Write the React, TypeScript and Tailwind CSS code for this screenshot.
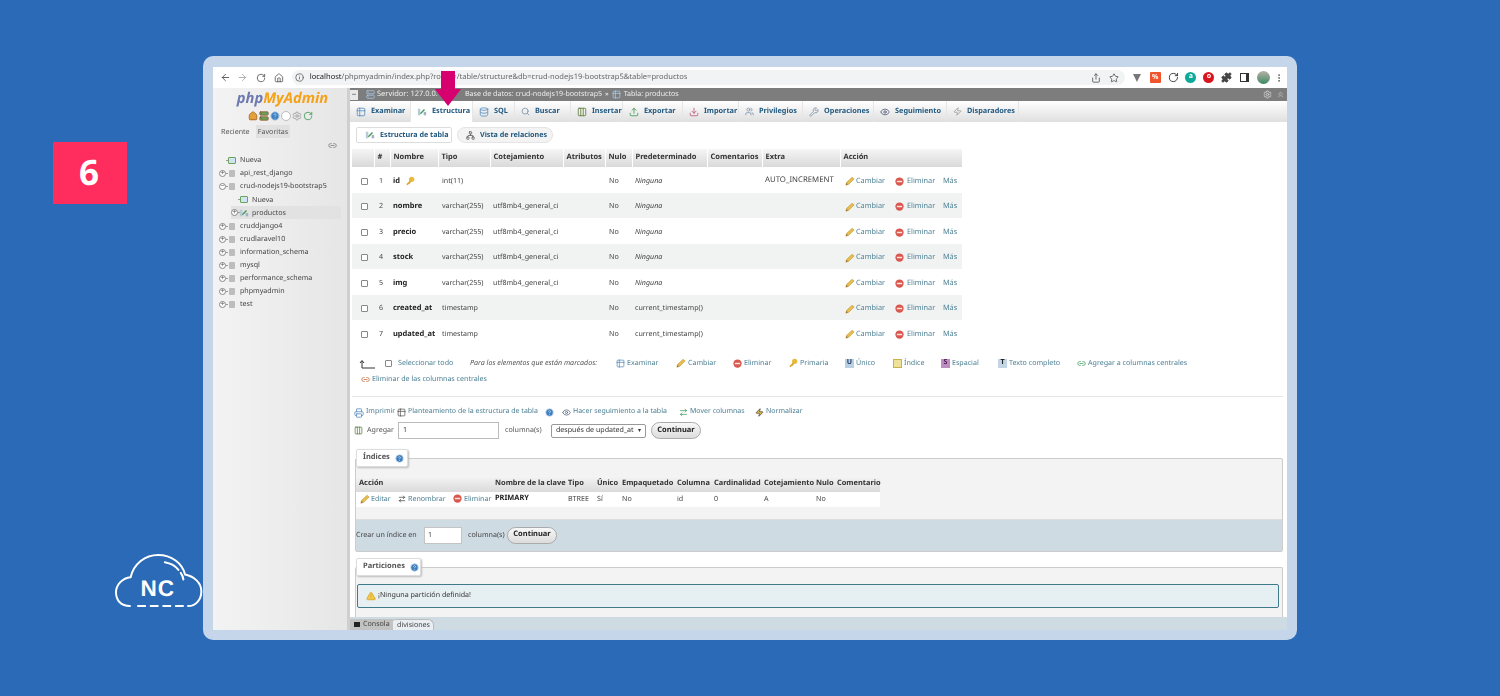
import {
  ArrowLeft,
  ArrowRight,
  RotateCw,
  House,
  Info,
  Share,
  Star,
  Puzzle,
  EllipsisVertical,
  Settings,
  ChevronsUp,
  Server,
  Table2,
  Network,
  Database,
  Search,
  Download,
  Upload,
  Users,
  Wrench,
  Eye,
  Zap,
  Printer,
  Link2,
  Columns3,
  HelpCircle,
  TriangleAlert,
  ArrowRightLeft,
} from "lucide-react";
import type { ReactNode } from "react";

const font = "font-['Liberation_Sans',Arial,sans-serif] [text-rendering:geometricPrecision]";

function Pencil() {
  return (
    <svg viewBox="0 0 12 12" className="h-[10px] w-[10px] shrink-0">
      <path d="M1 11 L2 7.5 L8.5 1.5 L11 3.5 L4.5 10 Z" fill="#e8bd4f" stroke="#b98f2e" strokeWidth="0.6" />
      <path d="M1 11 L2 8.5 L3.5 10 Z" fill="#8a6a32" />
    </svg>
  );
}

function Del() {
  return (
    <svg viewBox="0 0 12 12" className="h-[9px] w-[9px] shrink-0">
      <circle cx="6" cy="6" r="5.5" fill="#d9574e" />
      <rect x="2.5" y="5" width="7" height="2" fill="#fbe3e0" />
    </svg>
  );
}

function KeyIcon() {
  return (
    <svg viewBox="0 0 12 12" className="h-[10px] w-[10px] shrink-0">
      <circle cx="8" cy="4" r="3.2" fill="#e7b93f" />
      <path d="M6 5.5 L1.5 10 L3 11 L4 9.8 L5 10 L7.5 7 Z" fill="#d9a62e" />
    </svg>
  );
}

function Struct() {
  return (
    <svg viewBox="0 0 12 12" className="h-[10px] w-[10px] shrink-0">
      <path d="M1 2 H4 V10 H1 Z" fill="#b9cbd6" />
      <path d="M4 8 L9 3" stroke="#3f9a55" strokeWidth="1.6" />
      <path d="M8 6 H11 V10 H8 Z" fill="#9fb3c0" />
    </svg>
  );
}

function Help() {
  return <HelpCircle className="h-[9px] w-[9px] shrink-0 fill-[#3d7fc0] text-[#c9dcef]" />;
}

function Btn({ w }: { w: string }) {
  return (
    <span
      className={`flex h-[17px] items-center justify-center rounded-full border border-[#aaaaaa] bg-gradient-to-b from-[#f8f8f8] to-[#dcdcdc] text-[7.5px] font-bold text-[#222222] ${w}`}
    >
      Continuar
    </span>
  );
}

const tabs = [
  { label: "Examinar", w: "w-[61px]", icon: <Table2 className="h-[10px] w-[10px] text-[#5b8fc0]" /> },
  { label: "Estructura", w: "w-[62px]", icon: <Struct />, active: true },
  { label: "SQL", w: "w-[42px]", icon: <Database className="h-[10px] w-[10px] text-[#5b8fc0]" /> },
  { label: "Buscar", w: "w-[56px]", icon: <Search className="h-[9px] w-[9px] text-[#6f8ea8]" /> },
  { label: "Insertar", w: "w-[52px]", icon: <Columns3 className="h-[10px] w-[10px] text-[#5c7d3c]" /> },
  { label: "Exportar", w: "w-[60px]", icon: <Upload className="h-[10px] w-[10px] text-[#3f9a55]" /> },
  { label: "Importar", w: "w-[56px]", icon: <Download className="h-[10px] w-[10px] text-[#c2557c]" /> },
  { label: "Privilegios", w: "w-[64px]", icon: <Users className="h-[9px] w-[9px] text-[#6f8ea8]" /> },
  { label: "Operaciones", w: "w-[71px]", icon: <Wrench className="h-[10px] w-[10px] text-[#7f93a5]" /> },
  { label: "Seguimiento", w: "w-[73px]", icon: <Eye className="h-[10px] w-[10px] text-[#55617a]" /> },
  { label: "Disparadores", w: "w-[72px]", icon: <Zap className="h-[9px] w-[9px] text-[#8f9a8a]" /> },
];

const rows = [
  { n: 1, name: "id", type: "int(11)", col: "", def: "Ninguna", italic: true, extra: "AUTO_INCREMENT", key: true },
  { n: 2, name: "nombre", type: "varchar(255)", col: "utf8mb4_general_ci", def: "Ninguna", italic: true },
  { n: 3, name: "precio", type: "varchar(255)", col: "utf8mb4_general_ci", def: "Ninguna", italic: true },
  { n: 4, name: "stock", type: "varchar(255)", col: "utf8mb4_general_ci", def: "Ninguna", italic: true },
  { n: 5, name: "img", type: "varchar(255)", col: "utf8mb4_general_ci", def: "Ninguna", italic: true },
  { n: 6, name: "created_at", type: "timestamp", col: "", def: "current_timestamp()" },
  { n: 7, name: "updated_at", type: "timestamp", col: "", def: "current_timestamp()" },
];

const headers = [
  { t: "", w: "w-[22px]" },
  { t: "#", w: "w-[16px]" },
  { t: "Nombre", w: "w-[48px]" },
  { t: "Tipo", w: "w-[52px]" },
  { t: "Cotejamiento", w: "w-[73px]" },
  { t: "Atributos", w: "w-[42px]" },
  { t: "Nulo", w: "w-[27px]" },
  { t: "Predeterminado", w: "w-[75px]" },
  { t: "Comentarios", w: "w-[55px]" },
  { t: "Extra", w: "w-[78px]" },
  { t: "Acción", w: "w-[122px]" },
];

const tree = [
  { label: "Nueva", kind: "new" },
  { label: "api_rest_django", kind: "db" },
  { label: "crud-nodejs19-bootstrap5", kind: "open" },
  { label: "Nueva", kind: "subnew" },
  { label: "productos", kind: "table" },
  { label: "cruddjango4", kind: "db" },
  { label: "crudlaravel10", kind: "db" },
  { label: "information_schema", kind: "db" },
  { label: "mysql", kind: "db" },
  { label: "performance_schema", kind: "db" },
  { label: "phpmyadmin", kind: "db" },
  { label: "test", kind: "db" },
];

const bulk = [
  { label: "Examinar", w: "w-[60px]", icon: <Table2 className="h-[9px] w-[9px] text-[#5b8fc0]" /> },
  { label: "Cambiar", w: "w-[57px]", icon: <Pencil /> },
  { label: "Eliminar", w: "w-[55px]", icon: <Del /> },
  { label: "Primaria", w: "w-[57px]", icon: <KeyIcon /> },
  { label: "Único", w: "w-[48px]", icon: <span className="flex h-[9px] w-[9px] items-center justify-center bg-[#b9cfe4] text-[7px] font-bold text-[#1d3b66]">U</span> },
  { label: "Índice", w: "w-[48px]", icon: <span className="h-[9px] w-[9px] border border-[#c9b14a] bg-[#efe19a]" /> },
  { label: "Espacial", w: "w-[57px]", icon: <span className="flex h-[9px] w-[9px] items-center justify-center bg-[#bb8fc0] text-[7px] font-bold text-[#50205a]">S</span> },
  { label: "Texto completo", w: "w-[79px]", icon: <span className="flex h-[9px] w-[9px] items-center justify-center bg-[#c3d5e4] text-[7px] font-bold text-[#222222]">T</span> },
  { label: "Agregar a columnas centrales", w: "w-[125px]", icon: <Link2 className="h-[9px] w-[9px] text-[#3f9a55]" /> },
];

function Row({ children, className = "" }: { children: ReactNode; className?: string }) {
  return <div className={`flex items-center ${className}`}>{children}</div>;
}

function Legend({ children, w }: { children: ReactNode; w: string }) {
  return (
    <div
      className={`relative z-10 ml-[1px] flex h-[18px] items-center gap-[5px] rounded-[2px] border border-[#dddddd] bg-white pl-[6px] pt-[1px] text-[7.5px] font-bold text-[#555555] shadow-[1px_1px_2px_#bbbbbb] ${w}`}
    >
      {children}
    </div>
  );
}

function TreeRow({ label, kind }: { label: string; kind: string }) {
  const sub = kind === "subnew" || kind === "table";
  return (
    <div
      className={`flex h-[13.1px] items-center text-[7.1px] text-[#444444] ${
        kind === "table" ? "ml-[12px] mr-[6px] bg-[#e2e2e2]" : sub ? "ml-[12px]" : ""
      }`}
    >
      <span className="flex w-[7px] shrink-0 justify-center">
        {kind !== "new" && kind !== "subnew" && (
          <span className="flex h-[7px] w-[7px] shrink-0 items-center justify-center rounded-full border border-[#888888] bg-white text-[7px] leading-none text-[#555555]">
            {kind === "open" ? "−" : "+"}
          </span>
        )}
      </span>
      <span className="h-px w-[2px] shrink-0 bg-[#999999]" />
      <span className="mr-[4px] flex w-[8px] shrink-0 justify-center">
        {kind === "table" ? (
          <Struct />
        ) : kind === "new" || kind === "subnew" ? (
          <span className="h-[7px] w-[8px] rounded-[1px] border border-[#6aa35a] bg-[#cfe3f2]" />
        ) : (
          <span className="h-[7px] w-[6px] rounded-[1px] bg-[#bdbdbd]" />
        )}
      </span>
      <span className="whitespace-nowrap">{label}</span>
    </div>
  );
}

function Sidebar() {
  return (
    <aside className="flex w-[137px] shrink-0 flex-col border-r-[3px] border-[#cfcfcf] bg-gradient-to-r from-[#f3f3f3] to-[#e6e6e6] pl-[6px] text-[7.1px]">
      <div className="mt-[1px] flex h-[18px] items-center justify-center pr-[1px] text-[14.7px] font-bold italic leading-none">
        <span className="text-[#6c78af]">php</span>
        <span className="text-[#f5a21b]">MyAdmin</span>
      </div>
      <div className="mt-[4px] flex justify-center gap-[1px] pr-[6px]">
        <House className="h-[10px] w-[10px] fill-[#e2a13a] text-[#a8641d]" />
        <Server className="h-[10px] w-[10px] fill-[#6aa35a] text-[#94572f]" />
        <HelpCircle className="h-[10px] w-[10px] fill-[#3d7fc0] text-[#bcd3ea]" />
        <span className="h-[10px] w-[10px] rounded-full border border-[#bbbbbb] bg-white" />
        <Settings className="h-[10px] w-[10px] text-[#999999]" />
        <RotateCw className="h-[10px] w-[10px] text-[#3f9a55]" />
      </div>
      <div className="mt-[4px] flex h-[13px] items-center pl-[2px] text-[#555555]">
        <span className="w-[35px] pt-[1px]">Reciente</span>
        <span className="flex h-[13px] w-[34px] items-center justify-center bg-[#e1e1e1] pt-[1px]">Favoritas</span>
      </div>
      <div className="mt-[3px] flex h-[10px] justify-end pr-[10px]">
        <Link2 className="h-[9px] w-[9px] text-[#777777]" />
      </div>
      <div className="mt-[3px]">
        {tree.map((t, i) => (
          <TreeRow key={i} label={t.label} kind={t.kind} />
        ))}
      </div>
    </aside>
  );
}

function Main() {
  return (
    <main className="relative min-w-0 flex-1 overflow-hidden bg-white">
      <div className="flex h-[13px] items-center bg-[#7d7d7d] text-[7.1px] text-[#eeeeee]">
        <span className="flex h-[10px] w-[8px] items-center justify-center bg-[#e8e8e8] text-[8px] leading-none text-[#333333]">−</span>
        <Server className="ml-[8px] h-[9px] w-[9px] text-[#a9cbe8]" />
        <span className="ml-[2px] w-[88px] whitespace-nowrap text-[7.5px]">Servidor: 127.0.0.1</span>
        <span className="w-[135px] whitespace-nowrap">Base de datos: crud-nodejs19-bootstrap5</span>
        <span className="ml-[5px]">»</span>
        <Table2 className="ml-[3px] h-[9px] w-[9px] text-[#a9cbe8]" />
        <span className="ml-[3px] whitespace-nowrap">Tabla: productos</span>
        <Settings className="ml-auto h-[9px] w-[9px] text-[#dddddd]" />
        <ChevronsUp className="ml-[4px] mr-[2px] h-[9px] w-[9px] text-[#cccccc]" />
      </div>

      <div className="flex h-[21px] bg-gradient-to-b from-white to-[#dfdfdf] text-[7.3px] font-bold text-[#235a81]">
        {tabs.map((t) => (
          <div
            key={t.label}
            className={`flex items-center gap-[5px] whitespace-nowrap border-r border-[#e6e6e6] pl-[6px] ${t.w} ${t.active ? "bg-white" : ""}`}
          >
            {t.icon}
            {t.label}
          </div>
        ))}
      </div>

      <div className="ml-[6px] mt-[4px] flex h-[17px] gap-[5px] whitespace-nowrap pt-[1px] text-[7.2px] font-bold text-[#235a81]">
        <div className="flex w-[96px] items-center gap-[5px] rounded-[2px] border border-[#dddddd] bg-white pl-[8px]">
          <Struct />
          Estructura de tabla
        </div>
        <div className="flex w-[96px] items-center gap-[5px] rounded-full border border-[#e4e4e4] bg-[#f3f3f3] pl-[8px]">
          <Network className="h-[9px] w-[9px] text-[#555555]" />
          Vista de relaciones
        </div>
      </div>

      <table className="ml-[2px] mt-[6px] w-[610px] table-fixed border-collapse text-[7.1px] text-[#444444]">
        <thead>
          <tr className="h-[18px] text-[7.5px]">
            {headers.map((h, i) => (
              <th
                key={i}
                className={`border-r border-white bg-gradient-to-b from-[#f5f5f5] to-[#d9d9d9] pl-[3px] text-left font-bold text-[#333333] ${h.w}`}
              >
                {h.t}
              </th>
            ))}
          </tr>
        </thead>
        <tbody>
          {rows.map((r) => (
            <tr key={r.n} className={`h-[25.5px] [&>td]:pt-[3px] ${r.n % 2 === 0 ? "bg-[#f1f3f3]" : "bg-white"}`}>
              <td className="pl-[9px]">
                <span className="block h-[7px] w-[7px] rounded-[1px] border border-[#888888] bg-white" />
              </td>
              <td className="pl-[5px]">{r.n}</td>
              <td className="pl-[3px] text-[7.5px] font-bold text-[#222222]">
                <span className="flex items-center gap-[5px] whitespace-nowrap">
                  {r.name}
                  {r.key && <KeyIcon />}
                </span>
              </td>
              <td className="pl-[4px]">{r.type}</td>
              <td className="whitespace-nowrap pl-[3px]">{r.col}</td>
              <td />
              <td className="pl-[4px]">No</td>
              <td className={`whitespace-nowrap pl-[3px] ${r.italic ? "italic" : ""}`}>{r.def}</td>
              <td />
              <td className="whitespace-nowrap pl-[3px] text-[7.8px]">{r.extra}</td>
              <td className="pl-[5px]">
                <span className="flex items-center text-[7.3px] text-[#4b7f92]">
                  <span className="flex w-[50px] items-center gap-[1px]">
                    <Pencil />
                    Cambiar
                  </span>
                  <span className="flex w-[48px] items-center gap-[3px]">
                    <Del />
                    Eliminar
                  </span>
                  Más
                </span>
              </td>
            </tr>
          ))}
        </tbody>
      </table>

      <Row className="ml-[9px] mt-[12px] h-[12px] text-[7.1px] text-[#4b7f92]">
        <svg viewBox="0 0 16 10" className="h-[10px] w-[16px] shrink-0">
          <path d="M3 9 V2 M1 4 L3 1.5 L5 4 M3 9 H16" stroke="#333333" strokeWidth="1" fill="none" />
        </svg>
        <span className="ml-[10px] h-[7px] w-[7px] rounded-[1px] border border-[#888888] bg-white" />
        <span className="ml-[6px] w-[72px]">Seleccionar todo</span>
        <span className="w-[146px] whitespace-nowrap italic text-[#555555]">Para los elementos que están marcados:</span>
        {bulk.map((b) => (
          <span key={b.label} className={`flex items-center gap-[2px] whitespace-nowrap ${b.w}`}>
            {b.icon}
            {b.label}
          </span>
        ))}
      </Row>
      <Row className="ml-[11px] mt-[4px] h-[12px] gap-[2px] text-[7.1px] text-[#4b7f92]">
        <Link2 className="h-[9px] w-[9px] text-[#c2683a]" />
        Eliminar de las columnas centrales
      </Row>

      <div className="ml-[2px] mr-[4px] mt-[10px] h-px bg-[#e6e6e6]" />

      <Row className="ml-[4px] mt-[10px] h-[12px] text-[7px] text-[#4b7f92]">
        <span className="flex w-[43px] items-center gap-[2px]">
          <Printer className="h-[10px] w-[10px] text-[#5b8fc0]" />
          Imprimir
        </span>
        <span className="flex w-[165px] items-center gap-[2px] whitespace-nowrap">
          <Table2 className="h-[9px] w-[9px] text-[#555555]" />
          Planteamiento de la estructura de tabla
          <span className="ml-[5px]"><Help /></span>
        </span>
        <span className="flex w-[117px] items-center gap-[2px] whitespace-nowrap">
          <Eye className="h-[9px] w-[9px] text-[#55617a]" />
          Hacer seguimiento a la tabla
        </span>
        <span className="flex w-[76px] items-center gap-[2px] whitespace-nowrap">
          <ArrowRightLeft className="h-[9px] w-[9px] text-[#3f9a55]" />
          Mover columnas
        </span>
        <span className="flex items-center gap-[2px]">
          <Zap className="h-[9px] w-[9px] fill-[#e8b93f] text-[#444444]" />
          Normalizar
        </span>
      </Row>

      <Row className="ml-[4px] mt-[3px] h-[18px] text-[7.1px] text-[#555555]">
        <Columns3 className="h-[9px] w-[9px] text-[#5c7d3c]" />
        <span className="ml-[4px] w-[31px]">Agregar</span>
        <span className="flex h-[17px] w-[101px] items-center border border-[#bbbbbb] bg-white pl-[4px] text-[#333333]">1</span>
        <span className="ml-[6px] w-[46px]">columna(s)</span>
        <span className="flex h-[14px] w-[95px] items-center justify-between whitespace-nowrap rounded-[2px] border border-[#999999] bg-white px-[4px] text-[#333333]">
          después de updated_at
          <span className="text-[6px]">▾</span>
        </span>
        <span className="ml-[5px]">
          <Btn w="w-[50px]" />
        </span>
      </Row>

      <div className="ml-[5px] mr-[4px] mt-[9px]">
        <Legend w="w-[52px]">
          Índices
          <Help />
        </Legend>
        <div className="mt-[-9px] rounded-[2px] border border-[#cccccc] bg-[#f3f3f3]">
          <div className="h-[17px]" />
          <table className="w-[524px] table-fixed border-collapse text-[7.1px] text-[#444444]">
            <thead>
              <tr className="h-[16px] bg-gradient-to-b from-[#f5f5f5] to-[#dadada] text-left text-[7.4px] font-bold text-[#333333]">
                <th className="w-[137px] pl-[3px]">Acción</th>
                <th className="w-[72px] whitespace-nowrap pl-[2px]">Nombre de la clave</th>
                <th className="w-[29px] pl-[3px]">Tipo</th>
                <th className="w-[25px] pl-[3px]">Único</th>
                <th className="w-[55px] pl-[3px]">Empaquetado</th>
                <th className="w-[37px] pl-[3px]">Columna</th>
                <th className="w-[50px] pl-[3px]">Cardinalidad</th>
                <th className="w-[52px] pl-[3px]">Cotejamiento</th>
                <th className="w-[21px] pl-[3px]">Nulo</th>
                <th className="pl-[3px]">Comentario</th>
              </tr>
            </thead>
            <tbody>
              <tr className="h-[15px] bg-white">
                <td className="pl-[4px]">
                  <span className="flex items-center whitespace-nowrap text-[#4b7f92]">
                    <span className="flex w-[38px] items-center gap-[1px]">
                      <Pencil />
                      Editar
                    </span>
                    <span className="flex w-[55px] items-center gap-[2px]">
                      <ArrowRightLeft className="h-[8px] w-[8px] text-[#333333]" />
                      Renombrar
                    </span>
                    <span className="flex items-center gap-[2px]">
                      <Del />
                      Eliminar
                    </span>
                  </span>
                </td>
                <td className="pl-[2px] text-[7.4px] font-bold text-[#222222]">PRIMARY</td>
                <td className="pl-[3px]">BTREE</td>
                <td className="pl-[3px]">Sí</td>
                <td className="pl-[3px]">No</td>
                <td className="pl-[3px]">id</td>
                <td className="pl-[3px]">0</td>
                <td className="pl-[3px]">A</td>
                <td className="pl-[3px]">No</td>
                <td />
              </tr>
            </tbody>
          </table>
          <div className="h-[12px]" />
          <Row className="h-[32px] border-t border-[#dddddd] bg-[#cfdbe3] text-[7.1px] text-[#444444]">
            <span className="w-[68px] whitespace-nowrap">Crear un índice en</span>
            <span className="flex h-[17px] w-[38px] items-center border border-[#c4c4c4] bg-white pl-[3px]">1</span>
            <span className="ml-[6px] w-[39px]">columna(s)</span>
            <Btn w="w-[50px]" />
          </Row>
        </div>
      </div>

      <div className="ml-[5px] mr-[4px] mt-[6px]">
        <Legend w="w-[65px]">
          Particiones
          <Help />
        </Legend>
        <div className="mt-[-9px] h-[50px] rounded-t-[2px] border border-b-0 border-[#cccccc] bg-[#f3f3f3] pt-[16px]">
          <Row className="ml-[1px] mr-[3px] h-[24px] gap-[2px] rounded-[2px] border border-[#3f7a8a] bg-[#e6eff2] pl-[8px] text-[7.1px] text-[#333333]">
            <TriangleAlert className="h-[10px] w-[10px] fill-[#f2c94c] text-[#d9a62e]" />
            ¡Ninguna partición definida!
          </Row>
        </div>
      </div>
      <div className="h-[14px] bg-[#cfdbe3] pl-[40px] pt-[2px]">
        <div className="flex h-[12px] w-[44px] items-center justify-end rounded-t-[6px] border border-b-0 border-[#bbbbbb] bg-[#e8eef2] pr-[3px] text-[7.1px] text-[#444444]">
          divisiones
        </div>
      </div>

      {/* la consola queda encima del contenido */}
      <div className="absolute bottom-0 left-0 flex h-[11px] w-[43px] items-center gap-[3px] bg-[#c2c2c2] pl-[4px] text-[7.1px] text-[#444444]">
        <span className="h-[5px] w-[6px] bg-[#222222]" />
        Consola
      </div>
    </main>
  );
}

function ChromeBar() {
  return (
    <div className="flex h-[21px] items-center bg-white pl-[7px] pr-[3px] text-[#555555]">
      <ArrowLeft className="h-[11px] w-[11px]" />
      <ArrowRight className="ml-[6px] h-[11px] w-[11px] text-[#a8a8a8]" />
      <RotateCw className="ml-[8px] h-[10px] w-[10px]" />
      <House className="ml-[8px] h-[10px] w-[10px]" />
      <div className="ml-[8px] flex h-[15px] w-[839px] items-center rounded-full bg-[#f1f3f4] pl-[3px] pr-[6px]">
        <Info className="h-[9px] w-[9px]" />
        <span className="ml-[6px] whitespace-nowrap text-[7.56px] text-[#666666]">
          <span className="text-[#222222]">localhost</span>
          /phpmyadmin/index.php?route=/table/structure&amp;db=crud-nodejs19-bootstrap5&amp;table=productos
        </span>
        <Share className="ml-auto h-[10px] w-[10px]" />
        <Star className="ml-[8px] h-[10px] w-[10px]" />
      </div>
      <svg viewBox="0 0 10 10" className="ml-[7px] h-[10px] w-[10px]">
        <path d="M1 1 H9 L5 9 Z" fill="#777777" />
      </svg>
      <span className="ml-[8px] flex h-[11px] w-[11px] items-center justify-center rounded-[1px] bg-[#f0542a] text-[7px] font-bold leading-none text-white">%</span>
      <RotateCw className="ml-[7px] h-[11px] w-[11px] text-[#333333]" />
      <span className="ml-[7px] flex h-[11px] w-[11px] items-center justify-center rounded-full bg-[#0fa99a] text-[7px] font-bold text-white">a</span>
      <span className="ml-[7px] flex h-[11px] w-[11px] items-center justify-center rounded-full bg-[#d8151f] text-[7px] font-bold text-white">o</span>
      <Puzzle className="ml-[7px] h-[11px] w-[11px] fill-[#444444] text-[#444444]" />
      <span className="ml-[8px] h-[9px] w-[9px] border border-r-[3px] border-[#333333]" />
      <span className="ml-[8px] h-[13px] w-[13px] rounded-full bg-gradient-to-b from-[#b8b0a8] to-[#2f8a62]" />
      <EllipsisVertical className="ml-[4px] h-[10px] w-[10px]" />
    </div>
  );
}

export default function App() {
  return (
    <div className={`flex h-[696px] w-[1500px] overflow-hidden bg-[#2a6ab6] ${font}`}>
      <div className="w-[203px] shrink-0 pt-[142px]">
        <div className="ml-[53px] flex h-[62px] w-[74px] items-center justify-center bg-[#ff2d5e] pr-[2px] text-[35px] font-bold text-white">
          6
        </div>
        <svg viewBox="45 35 265 170" className="ml-[115px] mt-[348px] h-[57px] w-[88px]" fill="none">
          <path
            d="M90 197 C62 197 48 178 48 156 C48 132 68 112 92 110 C102 70 135 43 175 43 C215 43 248 68 256 102 C285 108 305 128 305 152 C305 178 288 197 265 197"
            stroke="white"
            strokeWidth="6"
            strokeLinecap="round"
          />
          <path d="M112 197 H255" stroke="white" strokeWidth="6" strokeDasharray="26 12" />
          <path d="M195 65 C212 68 227 76 236 88 M243 97 C248 104 250 110 251 117" stroke="white" strokeWidth="6" strokeLinecap="round" />
          <text x="122" y="166" fill="white" fontSize="68" fontWeight="700" letterSpacing="3" fontFamily="Liberation Sans, Arial, sans-serif">
            NC
          </text>
        </svg>
      </div>

      <div className="relative mt-[56px] h-[584px] w-[1094px] rounded-[10px] bg-[#c6d6ea] p-[10px] pt-[11px]">
        <div className="flex h-[563px] flex-col overflow-hidden blur-[0.35px]">
          <ChromeBar />
          <div className="flex min-h-0 flex-1">
            <Sidebar />
            <Main />
          </div>
        </div>
        <svg viewBox="0 0 26 35" className="absolute left-[232px] top-[15px] h-[35px] w-[26px]">
          <path d="M6 0 H20 V18 H26 L13 35 L0 18 H6 Z" fill="#d6006f" />
        </svg>
      </div>
    </div>
  );
}
